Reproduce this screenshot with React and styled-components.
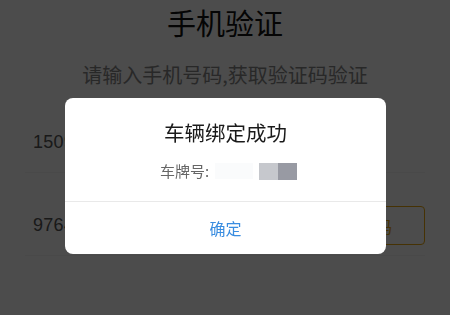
import React, { useState } from 'react';
import styled, { createGlobalStyle } from 'styled-components';

const GlobalStyle = createGlobalStyle`
  html, body {
    margin: 0;
    padding: 0;
    width: 450px;
    height: 315px;
    overflow: hidden;
    background: #fff;
    font-family: 'Noto Sans CJK SC', 'Noto Sans', sans-serif;
  }
`;

function App() {
  const [open, setOpen] = useState(true);
  const phone = '15099998888';
  const code = '976431';

  return (
    <>
      <GlobalStyle />
      <Page>
        <Title>手机验证</Title>
        <SubTitle>请输入手机号码,获取验证码验证</SubTitle>
        <Form>
          <Row>
            <Value>{phone}</Value>
          </Row>
          <Row>
            <Value>{code}</Value>
            <CodeButton>获取验证码</CodeButton>
          </Row>
        </Form>
      </Page>
      {open && (
        <Mask>
          <Dialog>
            <DialogBody>
              <DialogTitle>车辆绑定成功</DialogTitle>
              <PlateRow>
                <span>车牌号:</span>
                <Plate>
                  <PlateBlur />
                  <PlateBlock tone='#c6c8cd' />
                  <PlateBlock tone='#989aa3' />
                </Plate>
              </PlateRow>
            </DialogBody>
            <DialogFooter onClick={() => setOpen(false)}>确定</DialogFooter>
          </Dialog>
        </Mask>
      )}
    </>
  );
}

export default App;

const Page = styled.div`
  width: 450px;
  height: 315px;
  display: flex;
  flex-direction: column;
  align-items: center;
  background: #fdfdfd;
`;

const Title = styled.h1`
  margin: 0;
  font-size: 29px;
  line-height: 44px;
  font-weight: 400;
  color: #111;
`;

const SubTitle = styled.p`
  margin: 16px 0 0;
  font-size: 20px;
  line-height: 30px;
  color: #888;
`;

const Form = styled.div`
  width: 400px;
  display: flex;
  flex-direction: column;
`;

const Row = styled.div`
  display: flex;
  align-items: center;
  justify-content: space-between;
  height: 39px;
  padding: 33px 0 10px 8px;
  border-bottom: 1px solid #f4f4f4;
`;

const Value = styled.span`
  font-family: 'Liberation Sans', Arial, sans-serif;
  font-size: 18px;
  letter-spacing: 0.3px;
  color: #555;
`;

const CodeButton = styled.button`
  width: 146px;
  height: 39px;
  border: 1px solid #eaa90f;
  border-radius: 4px;
  background: transparent;
  color: #eaa90f;
  font-family: 'Noto Sans CJK SC', sans-serif;
  font-size: 16px;
  cursor: pointer;
`;

const Mask = styled.div`
  position: fixed;
  inset: 0;
  background: rgba(0, 0, 0, 0.7);
`;

const Dialog = styled.div`
  position: absolute;
  top: 98px;
  left: 65px;
  width: 321px;
  background: #fff;
  border-radius: 8px;
  overflow: hidden;
`;

const DialogBody = styled.div`
  display: flex;
  flex-direction: column;
  align-items: center;
  padding: 20px 0 19px;
  border-bottom: 1px solid #e9e9e9;
`;

const DialogTitle = styled.div`
  font-size: 20.5px;
  line-height: 28px;
  color: #1a1a1a;
`;

const PlateRow = styled.div`
  margin-top: 14px;
  display: flex;
  align-items: center;
  gap: 6px;
  font-size: 15px;
  line-height: 22px;
  color: #666;
  padding-left: 6px;
`;

const Plate = styled.span`
  display: flex;
  align-items: center;
`;

const PlateBlur = styled.span`
  width: 38px;
  height: 16px;
  margin-right: 6px;
  background: #fafbfc;
`;

const PlateBlock = styled.span`
  width: 19px;
  height: 17px;
  background: ${(p) => p.tone};
`;

const DialogFooter = styled.div`
  height: 52px;
  display: flex;
  align-items: center;
  justify-content: center;
  font-size: 16px;
  color: #3a8de0;
  cursor: pointer;
`;
